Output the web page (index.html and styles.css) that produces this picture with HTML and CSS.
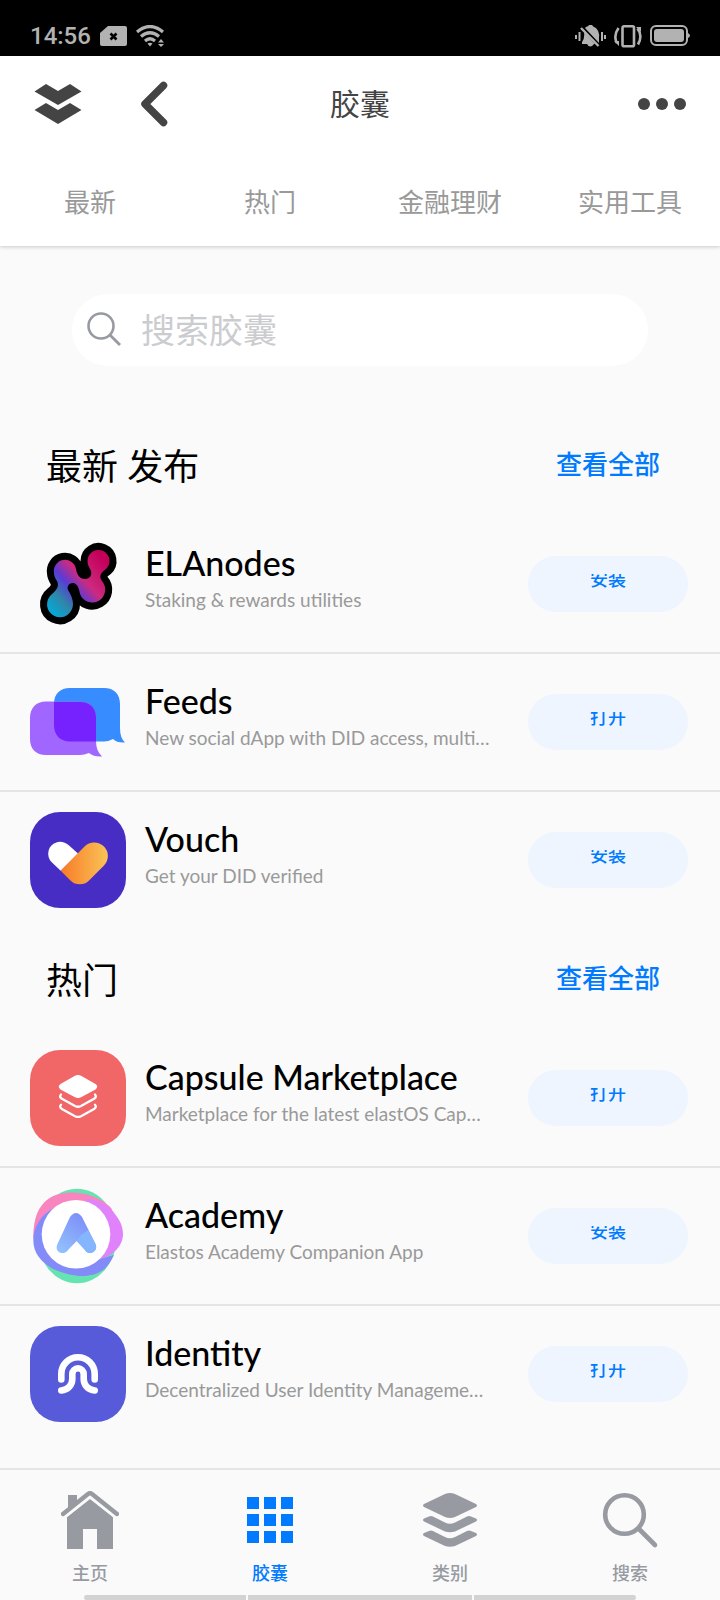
FILE: index.html
```html
<!DOCTYPE html>
<html lang="zh-CN">
<head>
<meta charset="utf-8">
<meta name="viewport" content="width=device-width, initial-scale=1">
<title>胶囊</title>
<link rel="stylesheet" href="styles.css">
</head>
<body>
<div class="status-bar">
  <div class="status-group">
    <span class="clock">14:56</span>
    <svg width="27" height="20" viewBox="0 0 27 20" aria-hidden="true"><path d="M8 0H25a2 2 0 0 1 2 2V18a2 2 0 0 1-2 2H2a2 2 0 0 1-2-2V7Z" fill="#b2b2b2"/><path d="M10.500 7.500l6 6M16.500 7.500l-6 6" stroke="#000" stroke-width="2.600"/></svg>
    <svg width="28" height="22" viewBox="0 0 28 22" aria-hidden="true"><g fill="none" stroke="#b2b2b2" stroke-width="3.200"><path d="M1 7Q14-4 27 7"/><path d="M5 11.500Q14 4 23 11.500"/><path d="M9 16Q14 11.500 19 16"/></g><path d="M11.500 18.500Q14 17 16.500 18.500L14 21.500ZM22 17.500L25 14l3 3.500ZM22 19h6l-3 3Z" fill="#b2b2b2"/></svg>
  </div>
  <div class="status-group status-right">
    <svg width="31" height="24" viewBox="0 0 31 24" aria-hidden="true"><path d="M7 18q3-4 2-10L20 20H19q-4 5-7 0H7ZM11 3q3-1 3-2h3q1 2 4 3 4 4 3 9v6L10 4Z" fill="#b2b2b2"/><path d="M6 4L23.500 22" stroke="#b2b2b2" stroke-width="2.400"/><path d="M1 11v4M4.500 8v9M27 8v9M30 11v4" stroke="#b2b2b2" stroke-width="2"/></svg>
    <svg width="30" height="24" viewBox="0 0 30 24" aria-hidden="true"><g fill="none" stroke="#b2b2b2" stroke-width="2.600"><rect x="9.500" y="2.300" width="11.500" height="20" rx="1.500"/><path d="M5.500 4Q0 12 4 19M24.500 4.500Q30 12 25 20.500"/></g><path d="M1 17h5v5ZM23 3h5v5Z" fill="#b2b2b2"/></svg>
    <svg width="40" height="22" viewBox="0 0 40 22" aria-hidden="true"><rect x="1" y="1" width="36" height="19" rx="5" fill="none" stroke="#b2b2b2" stroke-width="2"/><rect x="4" y="4" width="30" height="13" rx="3" fill="#b2b2b2"/><path d="M38 8q2 1 2 2.500T38 13Z" fill="#b2b2b2"/></svg>
  </div>
</div>

<header class="header">
  <div class="toolbar">
    <div class="toolbar-left">
      <button class="icon-button" type="button" aria-label="启动器"><svg width="48" height="40" viewBox="0 0 48 40"><path d="M.500 7.500L12 0 24 7 36 0 47.500 7.500 24 21ZM.500 26L12 19 24 26 36 19 47.500 26 24 40Z" fill="#444"/></svg></button>
      <button class="icon-button" type="button" aria-label="返回"><svg width="28" height="46" viewBox="0 0 28 46"><path d="M23.500 4.500L5 23 23.500 41.500" fill="none" stroke="#444" stroke-width="7.500" stroke-linecap="round" stroke-linejoin="round"/></svg></button>
    </div>
    <h1 class="page-title">胶囊</h1>
    <button class="icon-button more-button" type="button" aria-label="更多"><svg width="48" height="12" viewBox="0 0 48 12"><g fill="#444"><circle cx="6" cy="6" r="6"/><circle cx="24" cy="6" r="6"/><circle cx="42" cy="6" r="6"/></g></svg></button>
  </div>
  <nav class="categories">
    <a href="#new">最新</a>
    <a href="#hot">热门</a>
    <a href="#finance">金融理财</a>
    <a href="#tools">实用工具</a>
  </nav>
</header>

<main class="content">
  <label class="search">
    <svg width="34" height="34" viewBox="0 0 34 34" aria-hidden="true"><circle cx="14" cy="14" r="12.500" fill="none" stroke="#989aa2" stroke-width="2.600"/><path d="M23 23L33 33" stroke="#989aa2" stroke-width="2.800"/></svg>
    <input type="search" placeholder="搜索胶囊" aria-label="搜索胶囊">
  </label>

  <section id="new">
    <div class="section-head"><h2>最新 发布</h2><a href="#all-new">查看全部</a></div>
    <ul class="app-list">
      <li class="app">
        <svg class="app-icon" viewBox="0 0 96 96" aria-hidden="true">
          <defs><linearGradient id="ela" gradientUnits="userSpaceOnUse" x1="20" y1="75" x2="75" y2="25"><stop offset="0" stop-color="#05a9d6"/><stop offset=".22" stop-color="#2f86a8"/><stop offset=".42" stop-color="#5a3bd6"/><stop offset=".62" stop-color="#cc2a80"/><stop offset="1" stop-color="#c4005a"/></linearGradient>
          <path id="node" d="M24 37A11 11 0 0 1 46 33C47 40 51 43 55 43 60 43 62 39 61 35 59 31 57.500 29 57.500 25A11 11 0 1 1 76 33C70 37 69 41 72 45A13 13 0 1 1 50 58C49 52 47 47 43 47 38 47 37 51 38 54 41 59 43 63 43 68A13 13 0 1 1 22 58C28 53 29 49 27 45 25 42 24 40 24 37Z"/></defs>
          <use href="#node" fill="#000" stroke="#000" stroke-width="14" stroke-linejoin="round"/><use href="#node" fill="url(#ela)"/>
        </svg>
        <div class="app-text"><h3>ELAnodes</h3><p>Staking &amp; rewards utilities</p></div>
        <button class="action" type="button"><span>安装</span></button>
      </li>
      <li class="app">
        <svg class="app-icon" viewBox="0 0 96 96" aria-hidden="true"><path d="M40 14H74C84 14 90 20 90 30V54Q90 64 95 68.500 87 69 83 65 78 67.500 74 67.500H40C30 67.500 24 61 24 51V30C24 20 30 14 40 14Z" fill="#378cff"/><path d="M16 27.500H50C60 27.500 66 34 66 44V67Q66 77 72 82.500 64 83 59 79 54 81 50 81H16C6 81 0 75 0 65V44C0 34 6 27.500 16 27.500Z" fill="#a066ff"/><path d="M24 28H50C60 28 66 34 66 44V67.500H40C30 67.500 24 61 24 51Z" fill="#7622ff"/></svg>
        <div class="app-text"><h3>Feeds</h3><p>New social dApp with DID access, multi…</p></div>
        <button class="action" type="button"><span>打开</span></button>
      </li>
      <li class="app">
        <svg class="app-icon" viewBox="0 0 96 96" aria-hidden="true"><defs><linearGradient id="gold"><stop offset="0" stop-color="#f97b28"/><stop offset="1" stop-color="#f8c456"/></linearGradient></defs><rect width="96" height="96" rx="30" fill="#482dc5"/><path d="M48 41.500L30.700 58.700 21.500 50A12 12 0 0 1 21.500 33.500C27 28 34 29 38.500 33Z" fill="#fff"/><path d="M30.700 58.700L54.500 34.500A13.600 13.600 0 0 1 74 53.500L59 68.500A13 13 0 0 1 40.500 68.500Z" fill="url(#gold)"/></svg>
        <div class="app-text"><h3>Vouch</h3><p>Get your DID verified</p></div>
        <button class="action" type="button"><span>安装</span></button>
      </li>
    </ul>
  </section>

  <section id="hot">
    <div class="section-head"><h2>热门</h2><a href="#all-hot">查看全部</a></div>
    <ul class="app-list">
      <li class="app">
        <svg class="app-icon" viewBox="0 0 96 96" aria-hidden="true"><rect width="96" height="96" rx="30" fill="#f16667"/><path d="M44.500 26Q48 24 51.500 26L65.500 34Q69 36.500 65.500 39.500L51.500 47Q48 49 44.500 47L30.500 39.500Q27 36.500 30.500 34Z" fill="#fff"/><g fill="none" stroke="#fff" stroke-width="2.300" stroke-linecap="round"><path id="layer" d="M31 44.500Q29 46.500 31.500 48.500L45 56Q48 57.500 51 56L64.500 48.500Q67 46.500 65 44.500"/><use href="#layer" y="10.200"/></g></svg>
        <div class="app-text"><h3>Capsule Marketplace</h3><p>Marketplace for the latest elastOS Cap…</p></div>
        <button class="action" type="button"><span>打开</span></button>
      </li>
      <li class="app">
        <svg class="app-icon" viewBox="0 0 96 96" aria-hidden="true"><defs><linearGradient id="acad" x1="0" y1="1" x2=".7" y2="0"><stop offset="0" stop-color="#93c5fd"/><stop offset="1" stop-color="#7d8bf8"/></linearGradient></defs><ellipse cx="47" cy="48" rx="40" ry="47.300" fill="#65e3b0"/><path d="M3.300 50C3 25 12 4.500 42 4.500 62 4.500 76 14 82 21L60 50Z" fill="#f985c0"/><path d="M57 11C70 12 78 18 82 22 88 30 93 36 93 46 93 60 80 69 68 72L45 50Z" fill="#df82fb"/><path d="M24 20C10 27 3.300 40 3.300 52 3.300 66 12 73 17 77 26 84 42 88 52 88 70 88 78 80 84 67L70 71 46 46Z" fill="#838bf8"/><circle cx="46" cy="46.300" r="34.300" fill="#fff"/><path d="M40 29Q46 21 52 29L65.500 56C69 64 58 68.500 55 62L46.700 53 38 62C34 68.500 23.500 64 27.500 56Z" fill="url(#acad)"/><path d="M58 42L50 48 46.700 53 55 62C58 68 69 64 65.500 56Z" fill="#85b5ff"/></svg>
        <div class="app-text"><h3>Academy</h3><p>Elastos Academy Companion App</p></div>
        <button class="action" type="button"><span>安装</span></button>
      </li>
      <li class="app">
        <svg class="app-icon" viewBox="0 0 96 96" aria-hidden="true"><rect width="96" height="96" rx="30" fill="#575bd9"/><g fill="none" stroke="#fff" stroke-width="6.600" stroke-linecap="round"><path d="M31.300 53.500V48a16.700 16.700 0 0 1 33.400 0V53.500"/><path d="M31.300 64.500C38 64 42.300 59 42.300 53V48a5.700 5.700 0 0 1 11.400 0V53C53.700 59 58 64 64.700 64.500"/></g></svg>
        <div class="app-text"><h3>Identity</h3><p>Decentralized User Identity Manageme…</p></div>
        <button class="action" type="button"><span>打开</span></button>
      </li>
    </ul>
  </section>
</main>

<nav class="tab-bar">
  <a href="#home"><svg viewBox="0 0 58 58" aria-hidden="true"><path d="M7 23V4H16V14M29 8L52 26V58H36V38H22V58H6V26Z" fill="currentColor"/><path d="M2 23.500L29 2 56 23.500" fill="none" stroke="#fafafa" stroke-width="9"/><path d="M2 23L27 3Q29 1.500 31 3L56 23" fill="none" stroke="currentColor" stroke-width="4.400" stroke-linecap="round"/><path d="M7 4H16V11L7 18Z" fill="currentColor"/></svg>主页</a>
  <a class="active" href="#capsules" aria-current="page"><svg viewBox="0 0 58 58" aria-hidden="true"><path d="M6 6h12v12H6ZM23 6h12v12H23ZM40 6h12v12H40ZM6 23h12v12H6ZM23 23h12v12H23ZM40 23h12v12H40ZM6 40h12v12H6ZM23 40h12v12H23ZM40 40h12v12H40Z" fill="currentColor"/></svg>胶囊</a>
  <a href="#types"><svg viewBox="0 0 58 58" aria-hidden="true"><path d="M24 3Q29 1 34 3L55 13Q57 14.500 55 16L34 26Q29 28 24 26L3 16Q1 14.500 3 13Z" fill="currentColor"/><path id="sheet" d="M3 27.500L8 25.500Q10 24.500 12 25.500L24 31.500Q29 34 34 31.500L46 25.500Q48 24.500 50 25.500L55 27.500Q57 29 55 30.500L34 40.500Q29 42 24 40.500L3 30.500Q1 29 3 27.500Z" fill="currentColor"/><use href="#sheet" y="14.500"/></svg>类别</a>
  <a href="#search"><svg viewBox="0 0 58 58" aria-hidden="true"><circle cx="23.500" cy="23.500" r="19.300" fill="none" stroke="currentColor" stroke-width="4.600"/><path d="M38 38L54 54" stroke="currentColor" stroke-width="4.600" stroke-linecap="round"/></svg>搜索</a>
  <div class="gesture" aria-hidden="true"><i></i><i></i><i></i></div>
</nav>
</body>
</html>
```
FILE: styles.css
```css
* { box-sizing: border-box; }

body {
  margin: 0;
  min-height: 100vh;
  display: flex;
  flex-direction: column;
  background: #fafafa;
  color: #000;
  font-family: Lato, "Noto Sans CJK SC", sans-serif;
}

h1, h2, h3, p, ul { margin: 0; padding: 0; }
ul { list-style: none; }
a { color: inherit; text-decoration: none; }
button { border: 0; padding: 0; background: none; font: inherit; }
svg { display: block; flex: none; }

.status-bar {
  height: 56px;
  padding: 16px 30px 0;
  display: flex;
  align-items: center;
  justify-content: space-between;
  background: #000;
  color: #b2b2b2;
}
.status-group { display: flex; align-items: center; gap: 9px; }
.status-right { gap: 7px; }
.clock { font: 500 24px/28px Roboto, sans-serif; }

.header {
  position: relative;
  background: #fff;
  box-shadow: 0 1px 4px rgba(0, 0, 0, .2);
}
.toolbar {
  height: 96px;
  padding: 0 34px;
  display: grid;
  grid-template-columns: 1fr auto 1fr;
  align-items: center;
}
.toolbar-left { display: flex; align-items: center; gap: 58px; }
.more-button { justify-self: end; }
.page-title { padding-bottom: 2px; font-size: 30px; font-weight: 400; line-height: 44px; color: #444; }

.categories {
  height: 94px;
  display: grid;
  grid-template-columns: repeat(4, 1fr);
  align-items: center;
  padding-top: 6px;
  text-align: center;
  font-size: 26px;
  line-height: 38px;
  color: #999;
}

.content { flex: 1; padding: 48px 0 24px; }

.search {
  height: 72px;
  margin: 0 10% 50px;
  padding: 0 15px 2px;
  display: flex;
  align-items: center;
  gap: 20px;
  border-radius: 36px;
  background: #fff;
}
.search input {
  flex: 1;
  min-width: 0;
  height: 56px;
  border: 0;
  padding: 0;
  outline: 0;
  background: none;
  font: inherit;
  font-size: 34px;
  appearance: none;
}
.search input::placeholder { color: #cbccd0; opacity: 1; }

.section-head {
  height: 100px;
  padding: 0 60px 0 46px;
  display: flex;
  align-items: center;
  justify-content: space-between;
}
.section-head h2 { font-size: 36px; font-weight: 400; line-height: 52px; }
.section-head a { padding-bottom: 4px; font-size: 26px; font-weight: 500; line-height: 38px; color: #007aff; }

.app {
  height: 138px;
  padding: 0 32px 0 30px;
  display: grid;
  grid-template-columns: 96px 1fr 160px;
  align-items: center;
  border-bottom: 2px solid #e5e5e5;
}
.app:last-child { border-bottom-color: transparent; }
.app-icon { width: 96px; height: 96px; }
.app-text { min-width: 0; padding: 0 20px 8px 19px; }
.app-text h3 { font-size: 34px; font-weight: 500; line-height: 40px; }
.app-text p {
  overflow: hidden;
  white-space: nowrap;
  text-overflow: ellipsis;
  font-size: 19px;
  line-height: 34px;
  color: #999;
}

.action {
  height: 56px;
  padding-top: 18px;
  display: flex;
  align-items: flex-start;
  justify-content: center;
  border-radius: 28px;
  background: #eef5fe;
  color: #007aff;
  font-size: 18px;
  font-weight: 500;
}
.action span { height: 14px; line-height: 10px; overflow: hidden; }

.tab-bar {
  position: relative;
  height: 132px;
  padding-top: 21px;
  display: grid;
  grid-template-columns: repeat(4, 1fr);
  border-top: 2px solid #e5e5e5;
  color: #989aa2;
  font-size: 18px;
  font-weight: 500;
  line-height: 26px;
}
.tab-bar a { display: flex; flex-direction: column; align-items: center; gap: 11px; }
.tab-bar svg { width: 58px; height: 58px; }
.tab-bar .active { color: #007aff; }

.gesture {
  position: absolute;
  right: 84px;
  bottom: 0;
  left: 84px;
  height: 5px;
  display: grid;
  grid-template-columns: 162fr 224fr 162fr;
  gap: 2px;
  border-radius: 3px;
  overflow: hidden;
}
.gesture i { background: #d3d3d3; }
```
